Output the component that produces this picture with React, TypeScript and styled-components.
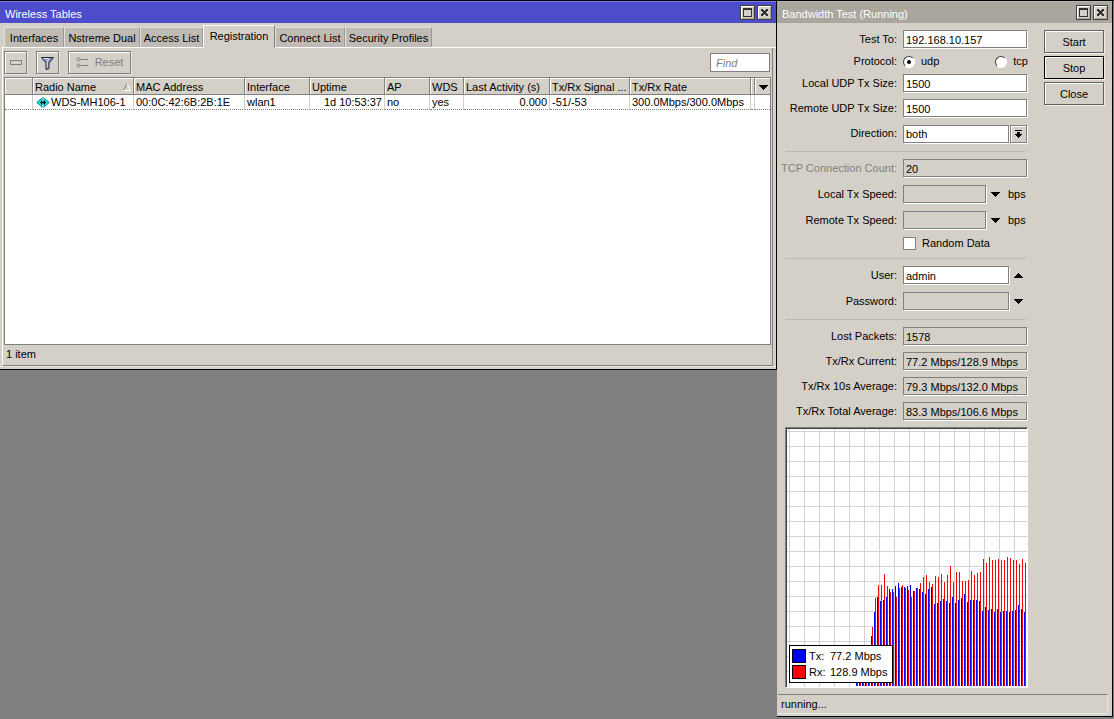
import React from "react";
import styled, { createGlobalStyle, css } from "styled-components";

const face = "#d4d0c8";
const shade = "#808080";

const GlobalStyle = createGlobalStyle`
  * { box-sizing: border-box; }
  body {
    margin: 0;
    background: #808080;
    color: #000;
    font: 11px/13px "Liberation Sans", Arial, sans-serif;
  }
  button, input, select { font: inherit; color: inherit; margin: 0; }
`;

const Desktop = styled.main`
  display: flex;
  align-items: flex-start;
  min-height: 100vh;
  padding-right: 1px;
  border-top: 1px solid #000;
`;

const Window = styled.section<{ $fixed?: boolean }>`
  display: flex;
  flex-direction: column;
  min-width: 0;
  background: ${face};
  border: 1px solid #000;
  border-top: 0;
  border-left: 0;
  ${(p) => (p.$fixed ? css`flex: 0 0 336px;` : css`flex: 1;`)}
`;

const TitleBar = styled.header<{ $active?: boolean }>`
  display: flex;
  align-items: center;
  gap: 2px;
  height: 22px;
  padding: 0 4px 0 5px;
  color: #fff;
  background: ${(p) => (p.$active ? "#4d4dcc" : "#aaa69f")};
  border-top: 1px solid ${(p) => (p.$active ? "#7d7ddb" : "#bbb8b2")};
`;

const Title = styled.h1`
  flex: 1;
  margin: 0;
  padding-top: 4px;
  font: inherit;
`;

const TitleButton = styled.button`
  display: grid;
  place-items: center;
  width: 15px;
  height: 15px;
  padding: 0;
  background: ${face};
  border: 1px solid #404040;
  box-shadow: inset 1px 1px #fff, inset -1px -1px #aaa69f;
`;

const TabStrip = styled.nav`
  display: flex;
  align-items: flex-end;
  height: 25px;
  margin-left: 2px;
  padding-left: 2px;
  border-bottom: 1px solid #fff;
`;

const Tab = styled.button<{ $width: number; $active?: boolean }>`
  width: ${(p) => p.$width}px;
  height: 20px;
  padding: 2px 0 0;
  white-space: nowrap;
  background: #bfbbb4;
  border: 0;
  border-top: 1px solid #e3e0da;
  border-left: 1px solid #e3e0da;
  border-right: 1px solid #9d9a94;
  ${(p) =>
    p.$active &&
    css`
      height: 23px;
      margin-bottom: -1px;
      padding: 0 0 2px;
      background: ${face};
      border-color: #fff ${shade} transparent #fff;
    `}
`;

const TabPanel = styled.div`
  display: flex;
  flex-direction: column;
  margin: 0 3px 0 2px;
  padding: 0 1px;
  border-left: 1px solid #fff;
  border-right: 1px solid ${shade};
  border-bottom: 1px solid ${shade};
`;

const Toolbar = styled.div`
  display: flex;
  align-items: center;
  gap: 9px;
  height: 29px;
  padding-right: 1px;
`;

const ToolButton = styled.button<{ $wide?: boolean }>`
  display: flex;
  align-items: center;
  justify-content: center;
  gap: 6px;
  width: ${(p) => (p.$wide ? 63 : 23)}px;
  height: 23px;
  padding: 0;
  color: ${shade};
  background: ${face};
  border: 1px solid ${shade};
  box-shadow: inset 1px 1px #fff, 1px 1px #e8e6e1;
  svg { flex: none; }
`;

const FindBox = styled.input`
  width: 60px;
  height: 19px;
  margin-left: auto;
  padding: 0 5px;
  background: #fff;
  border: 1px solid ${shade};
  outline: 0;
  &::placeholder { color: ${shade}; opacity: 1; font-style: italic; }
`;

const ListArea = styled.div`
  min-height: 268px;
  background: #fff;
  border: 1px solid ${shade};
`;

const Table = styled.table`
  width: 100%;
  table-layout: fixed;
  border-collapse: separate;
  border-spacing: 0;
  th, td {
    padding: 0 2px;
    font-weight: normal;
    text-align: left;
    white-space: nowrap;
    overflow: hidden;
  }
  th {
    height: 17px;
    padding-top: 2px;
    background: ${face};
    border-right: 1px solid ${shade};
    border-bottom: 1px solid ${shade};
    box-shadow: inset 1px 1px #fff;
  }
  td {
    height: 15px;
    border-right: 1px solid ${face};
    border-bottom: 1px dotted ${shade};
  }
  th:last-child, td:last-child { border-right: 0; }
`;

const HeadLine = styled.div`
  display: flex;
  justify-content: space-between;
  align-items: center;
`;

const NameCell = styled.div`
  display: flex;
  align-items: center;
  gap: 1px;
  padding-left: 1px;
`;

const NumberCell = styled.td`
  && { text-align: right; }
`;

const ListStatus = styled.footer`
  height: 20px;
  padding: 3px 2px;
`;

const WindowFoot = styled.div`
  height: 3px;
  border-top: 1px solid #e8e6e1;
`;

const TestBody = styled.div`
  display: flex;
  justify-content: space-between;
  padding: 7px 8px 6px;
`;

const Form = styled.form`
  width: 243px;
`;

const Group = styled.div<{ $gap?: number }>`
  display: flex;
  flex-direction: column;
  gap: ${(p) => p.$gap ?? 6}px;
`;

const Row = styled.div<{ $short?: boolean }>`
  display: grid;
  grid-template-columns: 112px 125px;
  column-gap: 6px;
  align-items: center;
  height: ${(p) => (p.$short ? 13 : 19)}px;
`;

const Label = styled.label<{ $dim?: boolean }>`
  justify-self: end;
  white-space: nowrap;
  color: ${(p) => (p.$dim ? shade : "#000")};
`;

const Field = styled.div`
  display: flex;
  align-items: center;
  min-width: 0;
`;

const fieldBox = css`
  align-self: start;
  height: 18px;
  padding: 1px 2px 0;
  border: 1px solid ${shade};
  border-radius: 0;
  outline: 0;
  box-shadow: 1px 1px #fff;
`;

const TextBox = styled.input<{ $width?: number; $flat?: boolean }>`
  ${fieldBox}
  width: ${(p) => p.$width ?? 124}px;
  background: ${(p) => (p.$flat ? face : "#fff")};
`;

const SelectBox = styled.select`
  ${fieldBox}
  width: 106px;
  appearance: none;
  background: #fff;
`;

const DropButton = styled.button`
  display: grid;
  place-items: center;
  align-self: start;
  width: 17px;
  height: 18px;
  margin-left: 1px;
  padding: 0;
  background: ${face};
  border: 1px solid ${shade};
  box-shadow: inset 1px 1px #fff, 1px 1px #fff;
`;

const ArrowButton = styled.button`
  display: grid;
  place-items: center;
  width: 19px;
  height: 19px;
  padding: 0;
  border: 0;
  background: none;
`;

const Unit = styled.span`
  padding-left: 3px;
`;

const Choice = styled.label<{ $end?: boolean }>`
  display: flex;
  align-items: center;
  gap: 6px;
  margin-left: ${(p) => (p.$end ? "auto" : 0)};
`;

const Radio = styled.input`
  appearance: none;
  display: grid;
  place-items: center;
  width: 12px;
  height: 12px;
  border: 1px solid;
  border-color: #404040 #fff #fff #404040;
  border-radius: 50%;
  background: #fff;
  &:checked::before {
    content: "";
    width: 4px;
    height: 4px;
    border-radius: 50%;
    background: #000;
  }
`;

const CheckBox = styled.input`
  appearance: none;
  width: 13px;
  height: 13px;
  background: #fff;
  border: 1px solid ${shade};
`;

const Separator = styled.hr`
  height: 1px;
  margin: 8px 2px 7px 0;
  border: 0;
  background: #bfbbb4;
`;

const ChartFrame = styled.figure`
  position: relative;
  margin: 6px 0 0;
  width: 243px;
  height: 261px;
  background: #fff;
  border: 1px solid;
  border-color: ${shade} #fff #fff ${shade};
  svg {
    display: block;
    border-top: 1px solid #404040;
    border-left: 1px solid #404040;
  }
`;

const Legend = styled.figcaption`
  position: absolute;
  left: 3px;
  bottom: 4px;
  display: grid;
  gap: 2px;
  width: 104px;
  padding: 3px 2px;
  background: #fff;
  border: 1px solid #000;
`;

const LegendItem = styled.div`
  display: grid;
  grid-template-columns: 14px 18px auto;
  column-gap: 3px;
  align-items: center;
  height: 14px;
  white-space: nowrap;
`;

const Swatch = styled.span<{ $color: string }>`
  height: 14px;
  border: 1px solid #000;
  background: ${(p) => p.$color};
`;

const Actions = styled.div`
  display: flex;
  flex-direction: column;
  gap: 3px;
`;

const ActionButton = styled.button<{ $default?: boolean }>`
  width: 60px;
  height: 23px;
  padding: 1px 0 0;
  background: ${face};
  border: 1px solid ${(p) => (p.$default ? "#000" : "#606060")};
  box-shadow: inset 1px 1px #fff, 1px 1px #f0eeea;
`;

const TestStatus = styled.footer`
  height: 20px;
  margin: 0 4px 2px 1px;
  padding: 3px;
  border-top: 1px solid ${shade};
  border-right: 1px solid #e8e6e1;
  border-bottom: 1px solid #e8e6e1;
`;

const Glyph = ({ w, h, d, fill = "#000" }: { w: number; h: number; d: string; fill?: string }) => (
  <svg width={w} height={h} viewBox={`0 0 ${w} ${h}`} shapeRendering="crispEdges" aria-hidden="true">
    <path d={d} fill={fill} fillRule="evenodd" />
  </svg>
);

const WindowButtons = () => (
  <>
    <TitleButton aria-label="Maximize">
      <Glyph w={9} h={9} d="M0 0H9V9H0ZM1 2V8H8V2Z" fill="#303030" />
    </TitleButton>
    <TitleButton aria-label="Close window">
      <Glyph w={7} h={7} d="M0 0H2V1H3V2H4V1H5V0H7V2H6V3H5V4H6V5H7V7H5V6H4V5H3V6H2V7H0V5H1V4H2V3H1V2H0Z" fill="#303030" />
    </TitleButton>
  </>
);

const Down = () => <Glyph w={9} h={5} d="M0 0H9V1H8V2H7V3H6V4H5V5H4V4H3V3H2V2H1V1H0Z" />;
const Up = () => <Glyph w={9} h={5} d="M0 5H9V4H8V3H7V2H6V1H5V0H4V1H3V2H2V3H1V4H0Z" />;

const FilterIcon = () => (
  <svg width="13" height="14" viewBox="0 0 13 14" aria-hidden="true">
    <path d="M.5 1.5h12L8 7v5.5L5 13.5V7Z" fill="#8796b8" stroke="#20253a" />
    <path d="M2.5 2.5h5L6.3 6.5v5" fill="none" stroke="#dce5f5" />
  </svg>
);

const ResetIcon = () => (
  <svg width="13" height="11" viewBox="0 0 13 11" fill="none" stroke="#808080" aria-hidden="true">
    <path d="M4 2.5h8M5 8.5h7" />
    <circle cx="2.5" cy="2.5" r="1.5" />
    <circle cx="2.5" cy="8.5" r="1.5" />
  </svg>
);

const LinkIcon = () => (
  <svg width="14" height="11" viewBox="0 0 14 11" aria-hidden="true">
    <path d="M6.5.5v10L.8 5.500ZM7.500.5v10l5.700-5Z" fill="#00e4e4" stroke="#008a8a" />
    <path d="M4 5.500h6M5.500 3.500v4M8.500 3.500v4" stroke="#000" />
    <path d="M7 0v4M7 7v4" stroke="#fff" />
  </svg>
);

const tabs: [string, number][] = [
  ["Interfaces", 60],
  ["Nstreme Dual", 76],
  ["Access List", 63],
  ["Registration", 72],
  ["Connect List", 70],
  ["Security Profiles", 87],
];

const columns = [28, 101, 111, 65, 75, 45, 34, 86, 80, 121, 4];

// Bar heights in pixels, one sample every three pixels, oldest first.
const tx = [
  8, 14, 20, 28, 36,
  50, 74, 89, 85, 86, 89, 97, 97, 100, 103, 99, 99, 100, 101, 95, 98, 97, 94, 92, 97, 99, 82, 83, 85, 87, 85,
  83, 89, 83, 86, 88, 92, 84, 86, 86, 86, 85, 75, 79, 76, 77, 74, 77, 74, 75, 75, 74, 75, 76, 81, 77, 74,
];
const rx = [
  8, 14, 20, 28, 38,
  59, 88, 101, 101, 112, 100, 94, 94, 89, 98, 101, 98, 96, 89, 95, 98, 103, 109, 111, 104, 102, 110, 109, 112,
  104, 111, 120, 104, 114, 114, 105, 105, 106, 115, 111, 113, 114, 127, 123, 129, 126, 126, 127, 126, 126,
  129, 128, 126, 126, 122, 127, 123,
];

const W = 240;
const H = 258;

const Chart = () => {
  const vertical = Array.from({ length: 16 }, (_, i) => `M${2 + i * 15} 0h1v${H}h-1z`).join("");
  const horizontal = Array.from({ length: 17 }, (_, i) => `M0 ${2 + i * 15}h${W}v1h-${W}z`).join("");
  const bars = (data: number[], offset: number) =>
    data.map((h, i) => `M${offset + i * 3} ${H - 1 - h}h1V${H - 1}h-1z`).join("");
  return (
    <svg width={W + 1} height={H + 1} viewBox={`0 0 ${W} ${H}`} shapeRendering="crispEdges" role="img" aria-label="Throughput">
      <path d={vertical + horizontal} fill="#d3d3d3" />
      <path d={bars(tx, 69)} fill="#00f" />
      <path d={bars(rx, 70)} fill="#f00" />
    </svg>
  );
};

const TextRow = ({ id, label, value, flat, dim }: { id: string; label: string; value: string; flat?: boolean; dim?: boolean }) => (
  <Row>
    <Label htmlFor={id} $dim={dim}>{label}</Label>
    <TextBox id={id} defaultValue={value} readOnly={flat} $flat={flat} />
  </Row>
);

const SpeedRow = ({ id, label }: { id: string; label: string }) => (
  <Row>
    <Label htmlFor={id}>{label}</Label>
    <Field>
      <TextBox id={id} $width={83} $flat />
      <ArrowButton type="button" aria-label={`Expand ${label}`}><Down /></ArrowButton>
      <Unit>bps</Unit>
    </Field>
  </Row>
);

const WirelessTables = () => (
  <Window>
    <TitleBar $active>
      <Title>Wireless Tables</Title>
      <WindowButtons />
    </TitleBar>
    <TabStrip>
      {tabs.map(([name, width]) => (
        <Tab key={name} $width={width} $active={name === "Registration"}>{name}</Tab>
      ))}
    </TabStrip>
    <TabPanel>
      <Toolbar>
        <ToolButton aria-label="Remove">
          <Glyph w={12} h={5} d="M0 0H12V5H0ZM1 1V4H11V1Z" fill={shade} />
        </ToolButton>
        <ToolButton aria-label="Filter"><FilterIcon /></ToolButton>
        <ToolButton $wide><ResetIcon />Reset</ToolButton>
        <FindBox placeholder="Find" aria-label="Find" />
      </Toolbar>
      <ListArea>
        <Table>
          <colgroup>
            {columns.map((w, i) => <col key={i} width={w} />)}
            <col />
          </colgroup>
          <thead>
            <tr>
              <th />
              <th>
                <HeadLine>
                  Radio Name
                  <svg width="8" height="8" viewBox="0 0 8 8" aria-hidden="true">
                    <path d="M.5 7.5 4 .5" stroke="#808080" fill="none" />
                    <path d="M4 .5l3.5 7h-7" stroke="#fff" fill="none" />
                  </svg>
                </HeadLine>
              </th>
              <th>MAC Address</th>
              <th>Interface</th>
              <th>Uptime</th>
              <th>AP</th>
              <th>WDS</th>
              <th>Last Activity (s)</th>
              <th>Tx/Rx Signal ...</th>
              <th>Tx/Rx Rate</th>
              <th />
              <th><HeadLine><span /><Down /></HeadLine></th>
            </tr>
          </thead>
          <tbody>
            <tr>
              <td />
              <td><NameCell><LinkIcon />WDS-MH106-1</NameCell></td>
              <td>00:0C:42:6B:2B:1E</td>
              <td>wlan1</td>
              <NumberCell>1d 10:53:37</NumberCell>
              <td>no</td>
              <td>yes</td>
              <NumberCell>0.000</NumberCell>
              <td>-51/-53</td>
              <td>300.0Mbps/300.0Mbps</td>
              <td />
              <td />
            </tr>
          </tbody>
        </Table>
      </ListArea>
      <ListStatus>1 item</ListStatus>
    </TabPanel>
    <WindowFoot />
  </Window>
);

const BandwidthTest = () => (
  <Window $fixed>
    <TitleBar>
      <Title>Bandwidth Test (Running)</Title>
      <WindowButtons />
    </TitleBar>
    <TestBody>
      <Form>
        <Group>
          <TextRow id="to" label="Test To:" value="192.168.10.157" />
          <Row $short>
            <Label as="span">Protocol:</Label>
            <Field>
              <Choice><Radio type="radio" name="protocol" defaultChecked />udp</Choice>
              <Choice $end><Radio type="radio" name="protocol" />tcp</Choice>
            </Field>
          </Row>
          <TextRow id="lsize" label="Local UDP Tx Size:" value="1500" />
          <TextRow id="rsize" label="Remote UDP Tx Size:" value="1500" />
          <Row>
            <Label htmlFor="direction">Direction:</Label>
            <Field>
              <SelectBox id="direction" defaultValue="both">
                <option>both</option>
                <option>receive</option>
                <option>send</option>
              </SelectBox>
              <DropButton type="button" aria-label="Open direction list">
                <Glyph w={7} h={8} d="M0 0H7V1H0ZM2 2H5V4H7V5H6V6H5V7H4V8H3V7H2V6H1V5H0V4H2Z" />
              </DropButton>
            </Field>
          </Row>
        </Group>
        <Separator />
        <Group $gap={7}>
          <TextRow id="count" label="TCP Connection Count:" value="20" flat dim />
          <SpeedRow id="lspeed" label="Local Tx Speed:" />
          <SpeedRow id="rspeed" label="Remote Tx Speed:" />
          <Row $short>
            <span />
            <Choice><CheckBox type="checkbox" />Random Data</Choice>
          </Row>
        </Group>
        <Separator />
        <Group $gap={7}>
          <Row>
            <Label htmlFor="user">User:</Label>
            <Field>
              <TextBox id="user" defaultValue="admin" $width={106} />
              <ArrowButton type="button" aria-label="Clear user"><Up /></ArrowButton>
            </Field>
          </Row>
          <Row>
            <Label htmlFor="password">Password:</Label>
            <Field>
              <TextBox id="password" type="password" $width={106} $flat />
              <ArrowButton type="button" aria-label="Set password"><Down /></ArrowButton>
            </Field>
          </Row>
        </Group>
        <Separator />
        <Group>
          <TextRow id="lost" label="Lost Packets:" value="1578" flat />
          <TextRow id="current" label="Tx/Rx Current:" value="77.2 Mbps/128.9 Mbps" flat />
          <TextRow id="avg10" label="Tx/Rx 10s Average:" value="79.3 Mbps/132.0 Mbps" flat />
          <TextRow id="total" label="Tx/Rx Total Average:" value="83.3 Mbps/106.6 Mbps" flat />
        </Group>
        <ChartFrame>
          <Chart />
          <Legend>
            <LegendItem><Swatch $color="#00f" /><span>Tx:</span><span>77.2 Mbps</span></LegendItem>
            <LegendItem><Swatch $color="#f00" /><span>Rx:</span><span>128.9 Mbps</span></LegendItem>
          </Legend>
        </ChartFrame>
      </Form>
      <Actions>
        <ActionButton>Start</ActionButton>
        <ActionButton $default>Stop</ActionButton>
        <ActionButton>Close</ActionButton>
      </Actions>
    </TestBody>
    <TestStatus>running...</TestStatus>
  </Window>
);

export default function App() {
  return (
    <>
      <GlobalStyle />
      <Desktop>
        <WirelessTables />
        <BandwidthTest />
      </Desktop>
    </>
  );
}
